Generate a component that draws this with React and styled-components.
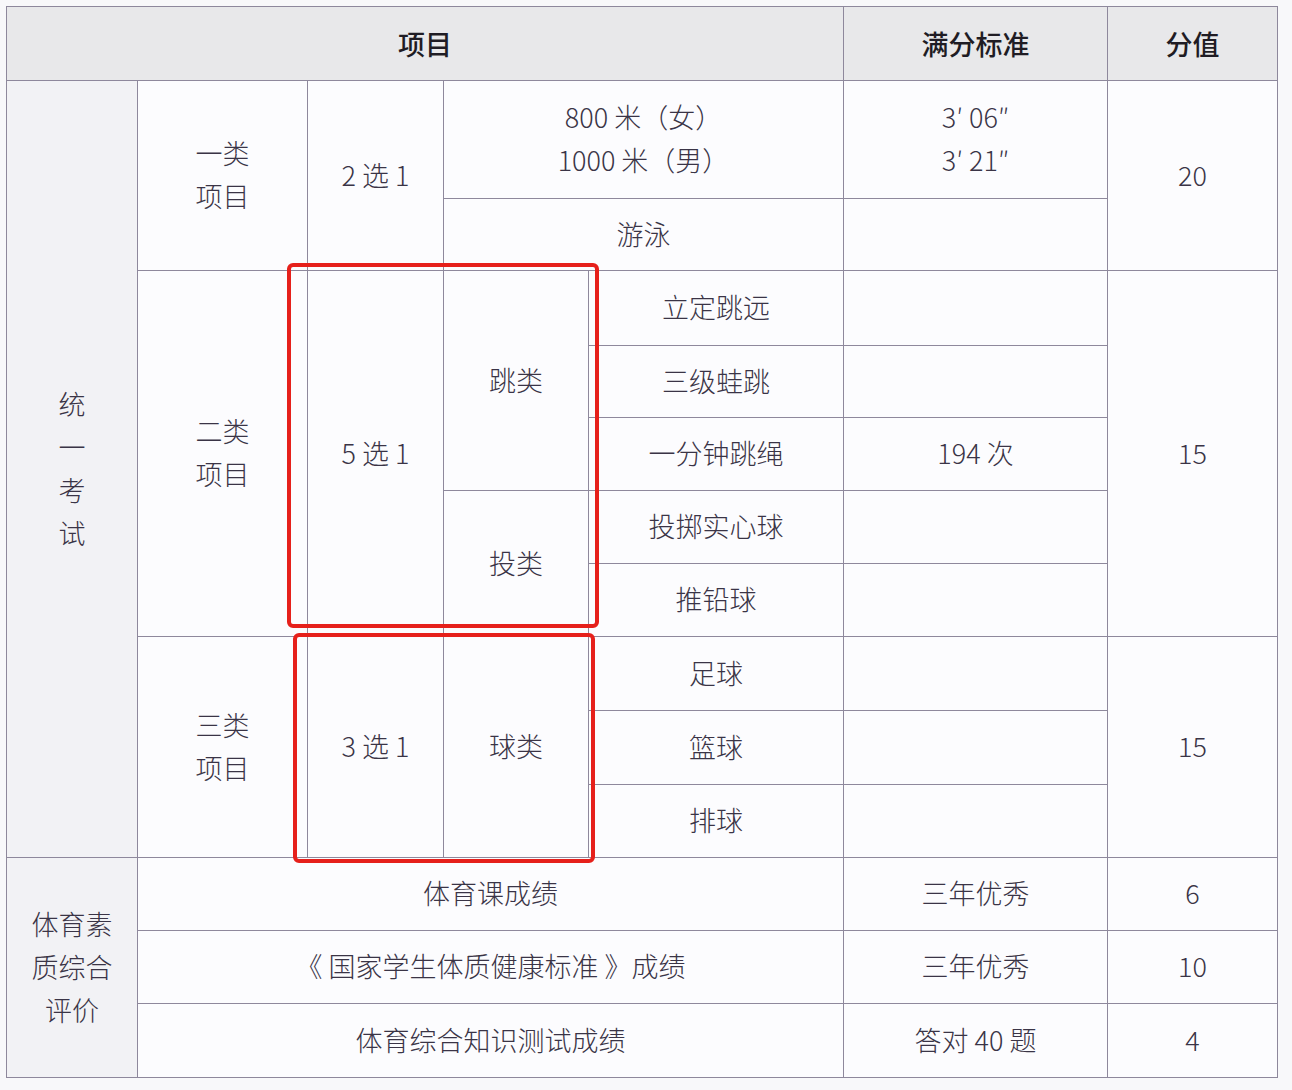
import { Fragment } from "react";
import styled, { createGlobalStyle } from "styled-components";

const GlobalStyle = createGlobalStyle`
	body {
		margin: 0;
		background: #f8f8fa;
		font-family: "Noto Sans CJK SC", "Noto Sans", sans-serif;
	}
`;

const Page = styled.div`
	padding: 6px 0 12px 6px;
`;

// 1px gaps over a line-coloured background draw the cell borders
const Table = styled.div`
	display: grid;
	grid-template-columns: 130px 169px 135px 144px 254px 263px 169px;
	grid-template-rows: 73px 117px 71px 74px 71px 72px 72px 72px 73px 73px 72px 72px 72px 73px;
	gap: 1px;
	width: max-content;
	background: #8e889c;
	border: 1px solid #8e889c;
`;

const Cell = styled.div`
	grid-row: ${(p) => p.row};
	grid-column: ${(p) => p.col};
	display: flex;
	flex-direction: column;
	align-items: center;
	justify-content: center;
	padding-bottom: 3px;
	background: ${(p) => (p.shade ? "#f2f2f5" : "#fcfcfe")};
	color: #3a3446;
	font-size: 27px;
	line-height: 43px;
	font-weight: 300;
	text-align: center;
	white-space: nowrap;
`;

const HeadCell = styled(Cell)`
	background: #e8e8ea;
	color: #1f1c24;
	font-weight: 500;
	padding-bottom: 0;
`;

// red marker frame lying over the table
const Highlight = styled.div`
	grid-row: ${(p) => p.row};
	grid-column: ${(p) => p.col};
	margin: ${(p) => p.offset};
	border: 4px solid #e6201b;
	border-radius: 6px;
	pointer-events: none;
	z-index: 2;
`;

const Lines = ({ items }) => items.map((t, i) => <span key={i}>{t}</span>);

const jumps = ["立定跳远", "三级蛙跳", "一分钟跳绳", "投掷实心球", "推铅球"];
const jumpScores = ["", "", "194 次", "", ""];
const balls = ["足球", "篮球", "排球"];
const quality = [
	["体育课成绩", "三年优秀", "6"],
	["《 国家学生体质健康标准 》成绩", "三年优秀", "10"],
	["体育综合知识测试成绩", "答对 40 题", "4"],
];

const App = () => {
	return (
		<>
			<GlobalStyle />
			<Page>
				<Table>
					<HeadCell row={1} col="1 / 6">项目</HeadCell>
					<HeadCell row={1} col={6}>满分标准</HeadCell>
					<HeadCell row={1} col={7}>分值</HeadCell>

					<Cell row="2 / 12" col={1} shade>
						<Lines items={["统", "一", "考", "试"]} />
					</Cell>

					<Cell row="2 / 4" col={2}>
						<Lines items={["一类", "项目"]} />
					</Cell>
					<Cell row="2 / 4" col={3}>2 选 1</Cell>
					<Cell row={2} col="4 / 6">
						<Lines items={["800 米（女）", "1000 米（男）"]} />
					</Cell>
					<Cell row={3} col="4 / 6">游泳</Cell>
					<Cell row={2} col={6}>
						<Lines items={["3′ 06″", "3′ 21″"]} />
					</Cell>
					<Cell row={3} col={6} />
					<Cell row="2 / 4" col={7}>20</Cell>

					<Cell row="4 / 9" col={2}>
						<Lines items={["二类", "项目"]} />
					</Cell>
					<Cell row="4 / 9" col={3}>5 选 1</Cell>
					<Cell row="4 / 7" col={4}>跳类</Cell>
					<Cell row="7 / 9" col={4}>投类</Cell>
					{jumps.map((name, i) => (
						<Cell key={name} row={4 + i} col={5}>{name}</Cell>
					))}
					{jumpScores.map((s, i) => (
						<Cell key={i} row={4 + i} col={6}>{s}</Cell>
					))}
					<Cell row="4 / 9" col={7}>15</Cell>

					<Cell row="9 / 12" col={2}>
						<Lines items={["三类", "项目"]} />
					</Cell>
					<Cell row="9 / 12" col={3}>3 选 1</Cell>
					<Cell row="9 / 12" col={4}>球类</Cell>
					{balls.map((name, i) => (
						<Cell key={name} row={9 + i} col={5}>{name}</Cell>
					))}
					{balls.map((name, i) => (
						<Cell key={name + "s"} row={9 + i} col={6} />
					))}
					<Cell row="9 / 12" col={7}>15</Cell>

					<Cell row="12 / 15" col={1} shade>
						<Lines items={["体育素", "质综合", "评价"]} />
					</Cell>
					{quality.map(([name, std, score], i) => (
						<Fragment key={name}>
							<Cell row={12 + i} col="2 / 6">{name}</Cell>
							<Cell row={12 + i} col={6}>{std}</Cell>
							<Cell row={12 + i} col={7}>{score}</Cell>
						</Fragment>
					))}

					<Highlight row="4 / 9" col="3 / 5" offset="-8px -11px 8px -21px" />
					<Highlight row="9 / 12" col="3 / 5" offset="-4px -7px -6px -15px" />
				</Table>
			</Page>
		</>
	);
};

export default App;
